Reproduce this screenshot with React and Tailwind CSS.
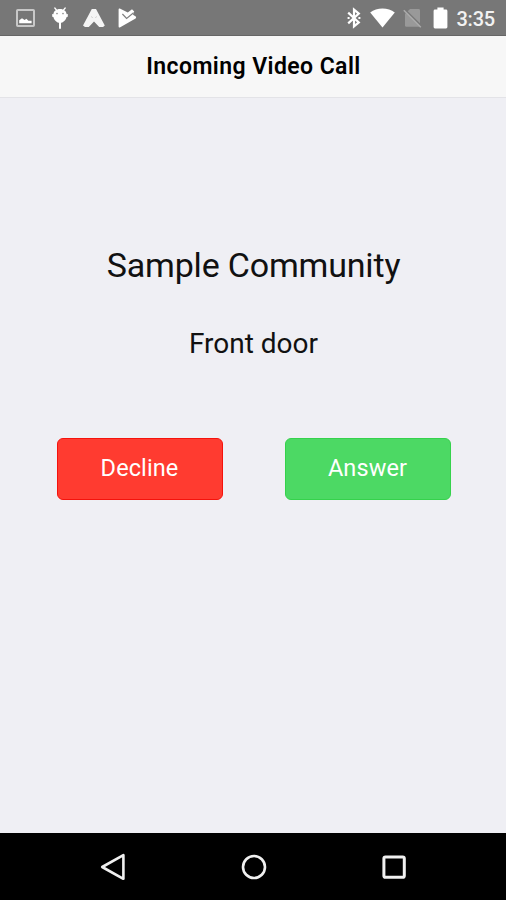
import React from 'react';

// Left side of the status bar: pending notifications
function NotificationIcons() {
  return (
    <div className="flex items-center text-white">
      <svg width="19" height="18" viewBox="0 0 19 18" className="mr-[17px]">
        <rect x="1" y="1" width="17" height="16" rx="0.8" fill="none" stroke="#c8c8c8" strokeWidth="2" />
        <path d="M3.2 14.2V11.2L6 9.2L8.6 11L10.4 9.8L12.4 11.8H15.6V14.2Z" fill="currentColor" />
      </svg>
      <svg width="16" height="22" viewBox="0 0 16 22" className="mr-[15px]">
        <path d="M2.8 1L5 3.6M13.2 1L11 3.6" stroke="currentColor" strokeWidth="1.3" strokeLinecap="round" />
        <path d="M8 2C11.8 2 14.6 4.4 14.6 7.2L15.8 7V9.8L14.6 10C13.8 13.2 11.4 15.8 8 16C4.6 15.8 2.2 13.2 1.4 10L0.2 9.8V7L1.4 7.2C1.4 4.4 4.2 2 8 2Z" fill="currentColor" />
        <path d="M8 15V21" stroke="currentColor" strokeWidth="2" strokeLinecap="round" />
        <circle cx="5" cy="6.6" r="0.8" fill="#888" />
        <circle cx="11" cy="6.6" r="0.8" fill="#888" />
      </svg>
      <svg width="22" height="18" viewBox="0 0 22 18" className="mr-[13px]">
        <path d="M8.8 0H13L21.8 16.4L20 18H16.2L11 12.4L5.8 18H2L0 16.4Z" fill="#f4f4f4" />
        <path d="M8.4 7.4L9.6 9M13.6 7.4L12.4 9" stroke="#c4c4c4" strokeWidth="0.8" />
      </svg>
      <svg width="19" height="20" viewBox="0 0 19 20">
        <path d="M0.6 1.4Q0.6 0.2 1.8 0.5L9.8 4.6L14 1.2L16.2 3.6L15 6.8L17.8 8.6Q18.6 9.6 17.6 10.4L1.8 19.4Q0.6 19.8 0.6 18.4Z" fill="currentColor" />
        <path d="M4.4 6L8.6 10.4L15.6 4.8" fill="none" stroke="#808080" strokeWidth="1.2" />
      </svg>
    </div>
  );
}

// Right side of the status bar: connectivity, battery and clock
function SystemIcons() {
  return (
    <div className="flex items-center text-white">
      <svg width="14" height="22" viewBox="0 0 14 22" className="mr-[9px]">
        <path d="M1.2 5.6L11.8 15.4L7 19.4V2.6L11.8 6.6L1.2 16.4" fill="none" stroke="currentColor" strokeWidth="2.2" />
        <path d="M0.6 11H2.6M11.4 11H13.4" stroke="currentColor" strokeWidth="2" />
      </svg>
      <svg width="25" height="20" viewBox="0 0 25 20" className="mr-2">
        <path d="M0.2 4.6C3.6 1.8 7.8 0.4 12.5 0.4S21.4 1.8 24.8 4.6L12.5 19.6Z" fill="currentColor" />
      </svg>
      <svg width="19" height="20" viewBox="0 0 19 20" className="mr-[11px]">
        <path d="M7 1H15.6Q17 1 17 2.4V17.4Q17 18.8 15.6 18.8H3.4Q2 18.8 2 17.4V6Z" fill="#999" />
        <path d="M1.6 1.2L18.4 17.8" stroke="#777" strokeWidth="1.6" />
        <path d="M0.8 2.2L17.8 19.2" stroke="#aaa" strokeWidth="1.6" />
      </svg>
      <svg width="15" height="22" viewBox="0 0 15 22" className="mr-[8.5px]">
        <path d="M4.4 0.4H10.6V2.6H13Q14.4 2.6 14.4 4V20Q14.4 21.4 13 21.4H2Q0.6 21.4 0.6 20V4Q0.6 2.6 2 2.6H4.4Z" fill="currentColor" />
      </svg>
      <span className="pt-0.5 text-[20px] leading-none font-medium tracking-[-0.2px] text-[#f2f2f2]">3:35</span>
    </div>
  );
}

function CallButton({ label, className }) {
  return (
    <button
      type="button"
      className={`h-[62px] w-[166px] rounded-[6px] border text-[23.5px] tracking-[0.1px] text-white ${className}`}
    >
      {label}
    </button>
  );
}

function NavigationBar() {
  return (
    <nav className="flex h-[67px] items-center justify-between bg-black pr-[99px] pl-[100px]">
      <svg width="26" height="28" viewBox="0 0 26 28">
        <path d="M2.2 14L23.4 2.2V25.8Z" fill="none" stroke="#f0f0f0" strokeWidth="2.6" strokeLinejoin="round" />
      </svg>
      <svg width="26" height="26" viewBox="0 0 26 26">
        <circle cx="13" cy="13" r="11" fill="none" stroke="#f0f0f0" strokeWidth="2.6" />
      </svg>
      <svg width="26" height="26" viewBox="0 0 26 26">
        <rect x="2.9" y="2.9" width="20.4" height="20.4" rx="1.6" fill="none" stroke="#f0f0f0" strokeWidth="3" />
      </svg>
    </nav>
  );
}

export default function App() {
  return (
    <div className="flex h-[900px] w-[506px] flex-col bg-[#efeff4] font-['Roboto',sans-serif] text-[#111]">
      <div className="flex h-9 items-center justify-between border-b border-[#666] bg-[#777] pr-[11px] pl-4">
        <NotificationIcons />
        <SystemIcons />
      </div>

      <header className="flex h-[62px] items-center justify-center border-b border-[#e3e3e7] bg-[#f7f7f7] pt-0.5 pl-px">
        <h1 className="text-[23px] font-semibold tracking-[0.42px] text-black">Incoming Video Call</h1>
      </header>

      <main className="flex flex-1 flex-col items-center pt-[147px] pl-px">
        <h2 className="text-[34px] leading-10 tracking-[-0.18px]">Sample Community</h2>
        <p className="mt-[43px] text-[28px] leading-8">Front door</p>
        <div className="mt-[78px] flex gap-[62px]">
          <CallButton label="Decline" className="border-[#f5120c] bg-[#ff3b30]" />
          <CallButton label="Answer" className="border-[#35d24c] bg-[#4cd964]" />
        </div>
      </main>

      <NavigationBar />
    </div>
  );
}
